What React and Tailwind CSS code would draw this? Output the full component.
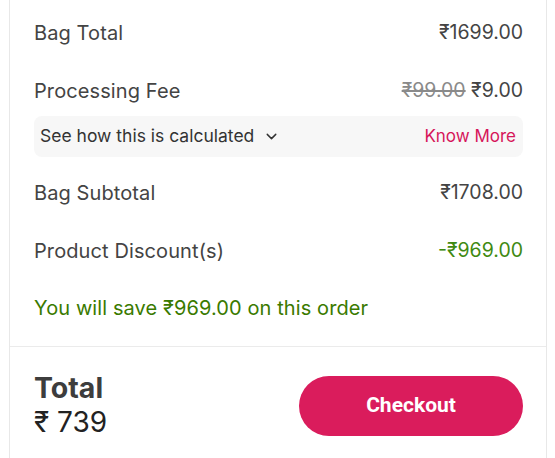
import React from "react";
import { ChevronDown } from "lucide-react";

const rows = [
  { label: "Bag Subtotal", value: "₹1708.00" },
  { label: "Product Discount(s)", value: "-₹969.00", green: true },
];

export default function App() {
  return (
    <div className="bg-white w-[555px] h-[458px] overflow-hidden font-['Inter',sans-serif]">
      <div className="ml-[9px] w-[538px] h-[458px] border-x border-[#e8e8e8] flex flex-col">
        <div className="pl-6 pr-[23px] pt-[20px] text-[20px] tracking-[0.005em] text-[#444]">
          {/* Bag total */}
          <div className="flex justify-between items-center h-[26px]">
            <span>Bag Total</span>
            <span className="text-[19.5px] tracking-normal">₹1699.00</span>
          </div>

          {/* Processing fee */}
          <div className="flex justify-between items-center h-[26px] mt-[32px]">
            <span>Processing Fee</span>
            <span className="text-[19.5px] tracking-normal">
              <span className="line-through decoration-2 text-[#8a8a8a]">₹99.00</span> ₹9.00
            </span>
          </div>
          <div className="mt-[12px] h-[41px] rounded-lg bg-[#f7f7f7] pl-[6px] pr-[7px] flex items-center justify-between tracking-normal">
            <span className="flex items-center gap-[9px] text-[17.5px] text-[#333]">
              See how this is calculated
              <ChevronDown size={17} strokeWidth={2} />
            </span>
            <span className="text-[17px] text-[#d6155a]">Know More</span>
          </div>

          <div className="flex justify-between items-center h-[26px] mt-[23px]">
            <span>{rows[0].label}</span>
            <span className="text-[19.5px] tracking-normal">{rows[0].value}</span>
          </div>
          <div className="flex justify-between items-center h-[26px] mt-[32px]">
            <span>{rows[1].label}</span>
            <span className="text-[19.5px] tracking-normal text-[#3f8a12]">{rows[1].value}</span>
          </div>

          <div className="mt-[31px] h-[26px] flex items-center text-[#3a7a00]">
            You will save ₹969.00 on this order
          </div>
        </div>

        <div className="mt-[25px] border-t border-[#ebebeb] flex items-center justify-between pl-6 pr-[23px] pt-[25px]">
          <div className="flex flex-col">
            <span className="text-[28.5px] font-bold text-[#3d3d3d] leading-[32px]">Total</span>
            <span className="text-[28px] text-[#222] leading-[36px]">₹ 739</span>
          </div>
          <button className="w-[224px] h-[60px] rounded-full bg-[#da1c5c] text-white text-[21px] font-bold font-['Roboto',sans-serif]">
            Checkout
          </button>
        </div>
      </div>
    </div>
  );
}
